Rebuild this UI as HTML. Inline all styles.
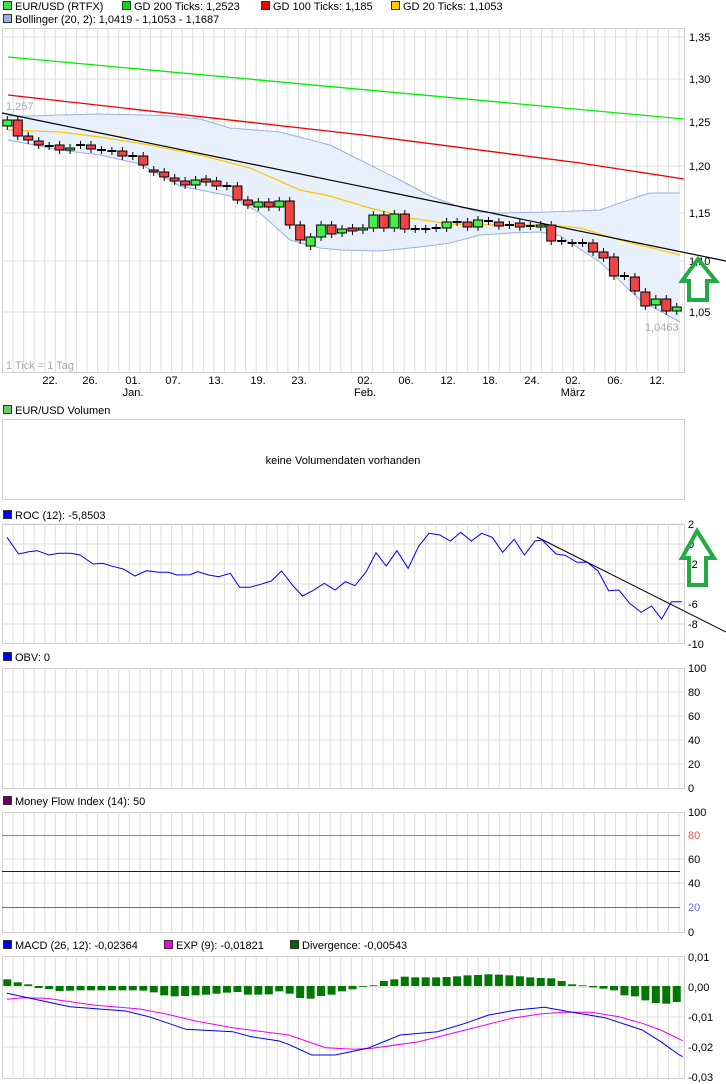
<!DOCTYPE html>
<html><head><meta charset="utf-8">
<style>
html,body{margin:0;padding:0;background:#fff;width:726px;height:1084px;overflow:hidden}
svg{display:block;font-family:"Liberation Sans",sans-serif;font-size:11px}
</style></head><body>
<svg id="s" width="726" height="1084" xmlns="http://www.w3.org/2000/svg"></svg>
<script>
var o=[];
function A(s){o.push(s);}
var L=2,R=684;
function gx(i){return 2.5+i*10.57;}
function cx(i){return 7.3+i*10.46;}
function vgrid(t,b){for(var i=1;i<65;i++){A('<line x1="'+gx(i)+'" y1="'+t+'" x2="'+gx(i)+'" y2="'+b+'" stroke="#dcdcdc"/>');}}
function hl(y,c){A('<line x1="'+L+'" y1="'+y+'" x2="'+R+'" y2="'+y+'" stroke="'+(c||'#dcdcdc')+'"/>');}
function box(t,b){A('<rect x="'+L+'.5" y="'+t+'.5" width="'+(R-L)+'" height="'+(b-t)+'" fill="none" stroke="#d0d0d0"/>');}
function lab(x,y,t,c,anc){A('<text x="'+x+'" y="'+y+'" fill="'+(c||'#000')+'"'+(anc?' text-anchor="'+anc+'"':'')+'>'+t+'</text>');}
function leg(x,y,c,t){A('<rect x="'+(x+.5)+'" y="'+(y-8.5)+'" width="8" height="8" fill="'+c+'" stroke="#333"/>');lab(x+12,y,t);}
function pl(pts,c,w){A('<polyline fill="none" stroke="'+c+'" stroke-width="'+(w||1)+'" points="'+pts.map(function(p){return p.join(',')}).join(' ')+'"/>');}

// legends main
leg(3,10,'#44dd44','EUR/USD (RTFX)');leg(122,10,'#00dd00','GD 200 Ticks: 1,2523');leg(261,10,'#ee0000','GD 100 Ticks: 1,185');leg(391,10,'#ffcc00','GD 20 Ticks: 1,1053');
leg(3,23,'#99b0dd','Bollinger (20, 2): 1,0419 - 1,1053 - 1,1687');

// main panel
var T=28,B=372;
vgrid(T,B);
var ly=[[37,'1,35'],[79,'1,30'],[122,'1,25'],[166,'1,20'],[213,'1,15'],[261,'1,10'],[312,'1,05']];
ly.forEach(function(a){hl(a[0]);});
box(T,B);
// bollinger fill
var up=[[8,116],[35,116],[60,115],[100,114],[145,115],[170,116],[200,119],[230,128],[280,132],[330,145],[360,160],[400,180],[430,196],[460,207],[480,212],[500,213],[550,212],[600,210],[640,196],[650,193],[680,193]];
var lo=[[8,140],[60,150],[100,155],[140,164],[180,186],[230,196],[260,213],[290,240],[320,248],[340,250],[380,251],[420,247],[450,243],[480,235],[510,233],[540,232],[560,236],[600,262],[640,300],[680,322]];
A('<polygon fill="#e8f0fb" points="'+up.concat(lo.slice().reverse()).map(function(p){return p.join(',')}).join(' ')+'"/>');
pl(up,'#9ab0e0');pl(lo,'#9ab0e0');
pl([[8,57],[684,119]],'#00ee00',1.3);
pl([[8,95],[363,135],[580,163],[684,179]],'#ee0000',1.3);
pl([[8,130],[60,132],[100,137],[150,145],[200,155],[250,168],[300,190],[330,196],[370,208],[410,218],[450,224],[500,225],[550,225],[580,228],[620,240],[660,250],[680,255]],'#ffc800',1.2);
pl([[2,113],[726,261]],'#000',1.2);
// candles [open,close] px
var C=[[126,120],[120,136],[136,140],[141,145],[146,146],[145,150],[150,148],[145,145],[145,149],[150,150],[151,151],[151,156],[156,156],[156,165],[170,172],[172,177],[178,181],[181,185],[185,180],[179,182],[181,186],[186,186],[186,200],[200,205],[207,202],[202,207],[207,201],[201,225],[225,240],[246,237],[237,225],[225,234],[233,229],[228,231],[230,228],[228,215],[215,228],[228,214],[214,229],[229,229],[229,229],[228,228],[228,222],[222,222],[222,227],[227,220],[221,221],[222,226],[225,225],[223,227],[226,226],[227,225],[225,241],[241,241],[243,243],[243,243],[243,252],[252,258],[257,276],[276,276],[277,291],[292,306],[305,299],[299,311],[311,307]];
C.forEach(function(c,i){var x=cx(i),a=Math.min(c[0],c[1]),b=Math.max(c[0],c[1]);
 A('<line x1="'+x+'" y1="'+(a-4)+'" x2="'+x+'" y2="'+(b+4)+'" stroke="#000"/>');
 if(b-a<1){A('<line x1="'+(x-4.5)+'" y1="'+a+'" x2="'+(x+4.5)+'" y2="'+a+'" stroke="#000" stroke-width="2"/>');}
 else{A('<rect x="'+(x-4.5)+'" y="'+a+'" width="9" height="'+(b-a)+'" fill="'+(c[1]<c[0]?'#44ee44':'#ee4444')+'" stroke="#000"/>');}
});
ly.forEach(function(a){lab(689,a[0]+4,a[1]);});
lab(6,110,'1,257','#aaa');lab(645,331,'1,0463','#aaa');lab(6,369,'1 Tick = 1 Tag','#aaa');
[[50,'22.'],[90,'26.'],[133,'01.'],[173,'07.'],[216,'13.'],[258,'19.'],[299,'23.'],[365,'02.'],[406,'06.'],[448,'12.'],[490,'18.'],[532,'24.'],[573,'02.'],[615,'06.'],[657,'12.']].forEach(function(a){lab(a[0],384,a[1],'#000','middle');});
lab(133,396,'Jan.','#000','middle');lab(365,396,'Feb.','#000','middle');lab(573,396,'März','#000','middle');
function arrow(tx,ty,bx1,bx2,by,sx1,sx2,sb){A('<polygon points="'+tx+','+ty+' '+bx2+','+by+' '+sx2+','+by+' '+sx2+','+sb+' '+sx1+','+sb+' '+sx1+','+by+' '+bx1+','+by+'" fill="none" stroke="#22aa44" stroke-width="4" stroke-linejoin="miter"/>');}
arrow(698,259,682,716,281,689,707,300);

// volume
leg(3,414,'#66cc66','EUR/USD Volumen');
box(419,499);
lab(343,464,'keine Volumendaten vorhanden','#000','middle');

// ROC
leg(3,519,'#0000ee','ROC (12): -5,8503');
vgrid(524,643);[524,544,564,584,604,624].forEach(function(y){hl(y);});box(524,643);
var rx=[15,40,62,80,105,127,152,172,200,220,245,265,290,315,340,362,380,408,425,448,470,495,515,537,560,583,605,630,650,672,697,720,742,763,787,808,830,853,877,900,922,945,968,990,1013,1035,1058,1080,1105,1127,1150,1165,1195,1215,1240,1262,1285,1308,1330,1353,1378,1400,1422,1443,1465];
var ry=[112,162,155,152,165,160,160,165,192,190,200,207,228,212,217,217,225,224,215,225,230,220,262,262,253,243,213,258,288,272,250,270,245,257,215,158,198,152,205,138,100,105,123,97,123,100,112,157,118,165,123,120,162,166,187,187,213,272,270,310,337,318,357,305,305];
pl(rx.map(function(x,i){return [(x/2.149).toFixed(1),(500+ry[i]/3).toFixed(1)];}),'#0000ee');
pl([[537,537],[726,632]],'#000');
[[524,'2'],[544,'0'],[564,'-2'],[604,'-6'],[624,'-8'],[644,'-10']].forEach(function(a){lab(688,a[0]+4,a[1]);});
arrow(697,531,682,714,558,689,706,585);

// OBV
leg(3,661,'#0000ee','OBV: 0');
vgrid(668,788);[692,716,740,764].forEach(function(y){hl(y);});box(668,788);
[[668,'100'],[692,'80'],[716,'60'],[740,'40'],[764,'20'],[788,'0']].forEach(function(a){lab(688,a[0]+4,a[1]);});

// MFI
leg(3,805,'#660066','Money Flow Index (14): 50');
vgrid(812,932);[859,883].forEach(function(y){hl(y);});box(812,932);
A('<line x1="2" y1="835.5" x2="680" y2="835.5" stroke="#e06060"/>');
A('<line x1="2" y1="871.5" x2="680" y2="871.5" stroke="#500050"/>');
A('<line x1="2" y1="907.5" x2="680" y2="907.5" stroke="#6060e0"/>');
[[812,'100'],[835,'80','#ee5555'],[859,'60'],[883,'40'],[907,'20','#6666ff'],[932,'0']].forEach(function(a){lab(688,a[0]+4,a[1],a[2]);});

// MACD
leg(3,949,'#0000ee','MACD (26, 12): -0,02364');leg(164,949,'#ee00ee','EXP (9): -0,01821');leg(290,949,'#006600','Divergence: -0,00543');
vgrid(956,1078);[987,1017,1047].forEach(function(y){hl(y);});box(956,1078);
var dv=[-20,-11,-5,6,9,15,14,13,13,13,13,13,13,14,19,28,31,30,28,26,23,20,18,26,26,25,16,23,36,38,30,26,16,10,2,-2,-15,-20,-28,-26,-26,-26,-27,-29,-32,-33,-35,-34,-32,-29,-26,-24,-23,-15,-5,-2,4,8,13,28,31,43,51,53,48];
dv.forEach(function(d,i){var x=cx(i),z=986;var h=d/3;A('<rect x="'+(x-4)+'" y="'+(h<0?z+h:z)+'" width="8" height="'+Math.max(Math.abs(h),0.8)+'" fill="#007700"/>');});
var mb=[[15,175],[60,188],[150,215],[270,228],[320,245],[400,283],[500,290],[540,305],[600,318],[620,328],[670,360],[720,360],[790,340],[860,300],[940,290],[1000,265],[1050,240],[1110,225],[1170,217],[1230,232],[1300,248],[1380,285],[1420,320],[1460,360],[1467,365]];
var me=[[15,193],[50,188],[100,190],[200,210],[300,222],[360,238],[420,258],[500,278],[620,300],[700,338],[760,343],[800,340],[900,320],[1000,285],[1100,250],[1160,237],[1210,232],[1270,232],[1330,245],[1380,265],[1420,285],[1467,317]];
function cv(a){return a.map(function(p){return [(p[0]/2.149).toFixed(1),(935+p[1]/3).toFixed(1)];});}
pl(cv(me),'#ee00ee');pl(cv(mb),'#0000ee');
[[957,'0,01'],[987,'0,00'],[1017,'-0,01'],[1047,'-0,02'],[1077,'-0,03']].forEach(function(a){lab(688,a[0]+4,a[1]);});

document.getElementById('s').innerHTML=o.join('');
</script>
</body></html>
